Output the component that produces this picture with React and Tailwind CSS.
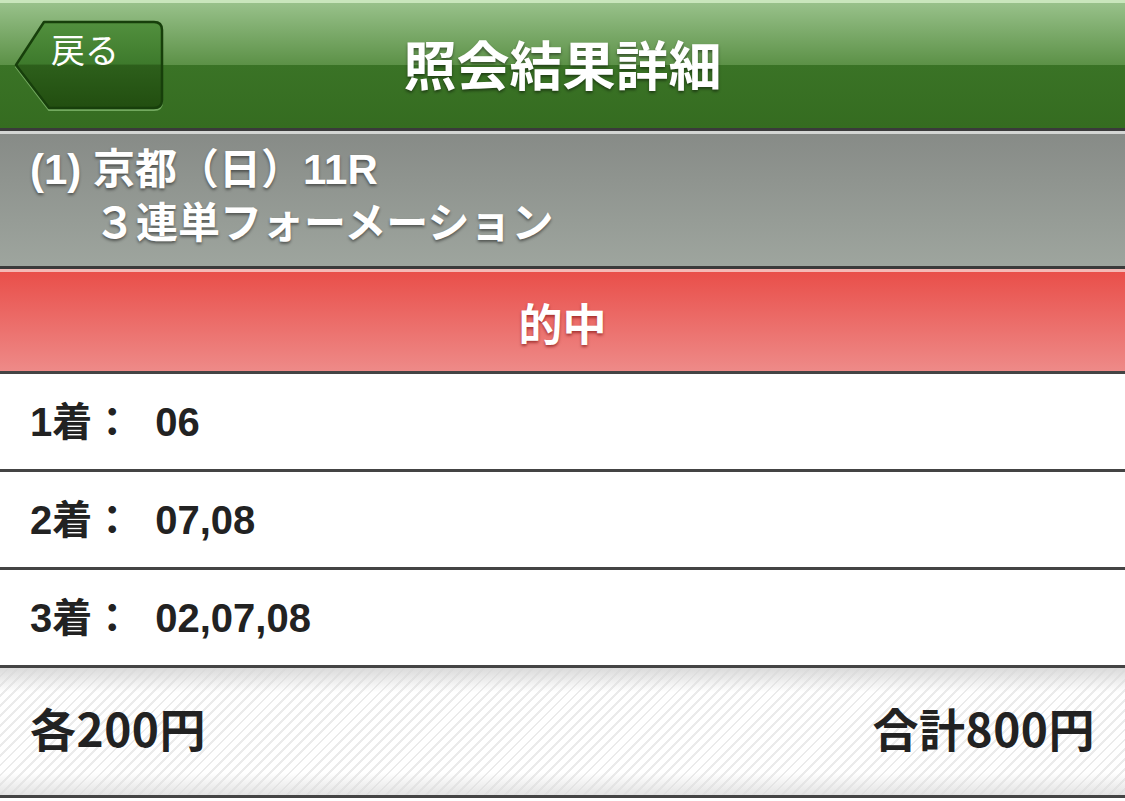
function BackButton() {
  return (
    <button className="absolute left-[14px] top-[20px] w-[152px] h-[94px]">
      <svg width="152" height="94" viewBox="0 0 152 94" className="absolute left-0 top-0">
        <defs>
          <linearGradient id="backFill" x1="0" y1="0" x2="0" y2="1">
            <stop offset="0" stopColor="#52903e" />
            <stop offset="0.49" stopColor="#3e7a2c" />
            <stop offset="0.5" stopColor="#2d5f1b" />
            <stop offset="1" stopColor="#224e10" />
          </linearGradient>
        </defs>
        <path
          d="M2 47 L30 4 H140 Q148 4 148 12 V82 Q148 90 140 90 H35 Z"
          fill="none"
          stroke="#72a95e"
          strokeWidth="2"
        />
        <path
          d="M2 45 L30 2 H140 Q148 2 148 10 V80 Q148 88 140 88 H35 Z"
          fill="url(#backFill)"
          stroke="#173f0b"
          strokeWidth="2.5"
          strokeLinejoin="round"
        />
      </svg>
      <span className="absolute left-[37px] top-[12px] text-white text-[34px] leading-none font-['Noto_Sans_CJK_JP',sans-serif] font-normal">
        戻る
      </span>
    </button>
  );
}

function Row({ place, value }) {
  return (
    <>
      <div className="h-[95px] flex items-center pl-[30px] text-[40px] font-bold text-[#222] font-['Liberation_Sans','Noto_Sans_CJK_JP',sans-serif]">
        <span>{place}着：</span>
        <span className="ml-[23px]">{value}</span>
      </div>
      <div className="h-[3px] bg-[#444]" />
    </>
  );
}

export default function App() {
  return (
    <div className="w-[1125px] h-[801px] bg-white overflow-hidden font-['Liberation_Sans','Noto_Sans_CJK_JP',sans-serif]">
      <header className="relative h-[128px] flex items-center justify-center bg-[linear-gradient(to_bottom,#c9e6bc_0px,#c9e6bc_3px,#98c18a_3px,#5c9147_65px,#3a7326_65px,#356c20_128px)]">
        <BackButton />
        <h1 className="pb-[2px] text-white font-bold text-[53px] leading-none font-['Noto_Sans_CJK_JP',sans-serif] [text-shadow:0_2px_3px_rgba(0,0,0,0.45)]">
          照会結果詳細
        </h1>
      </header>
      <div className="h-[3px] bg-[#3a3a3a]" />
      <div className="h-[3px] bg-[#d3d5d3]" />

      <section className="h-[132px] pt-[11px] pl-[30px] text-white font-bold text-[42px] leading-[50px] bg-[linear-gradient(to_bottom,#878b87,#9ea59e)] [text-shadow:0_2px_3px_rgba(0,0,0,0.45)]">
        <div>(1) 京都（日）11R</div>
        <div className="pl-[64px] font-['Noto_Sans_CJK_JP',sans-serif]">３連単フォーメーション</div>
      </section>
      <div className="h-[3px] bg-[#3a3a3a]" />
      <div className="h-[3px] bg-[#f4b9b6]" />

      <section className="h-[99px] flex items-center justify-center bg-[linear-gradient(to_bottom,#e94f4a,#ee8a88)]">
        <span className="text-white font-bold text-[44px] leading-none font-['Noto_Sans_CJK_JP',sans-serif] [text-shadow:0_2px_3px_rgba(110,0,0,0.55)]">
          的中
        </span>
      </section>
      <div className="h-[3px] bg-[#444]" />

      <Row place="1" value="06" />
      <Row place="2" value="07,08" />
      <Row place="3" value="02,07,08" />

      <footer className="h-[127px] flex items-center justify-between pl-[30px] pr-[30px] pb-[8px] text-[46px] font-bold text-[#222] font-['Noto_Sans_CJK_JP',sans-serif] [background-image:linear-gradient(to_bottom,rgba(215,215,215,0.9)_0px,rgba(255,255,255,0)_24px,rgba(255,255,255,0)_105px,rgba(220,220,220,0.8)_127px),repeating-linear-gradient(135deg,#ffffff_0px,#ffffff_5px,#ebebeb_5px,#ebebeb_7px)]">
        <span className="tracking-[0.5px]">各200円</span>
        <span className="tracking-[0.5px]">合計800円</span>
      </footer>
      <div className="h-[3px] bg-[#444]" />
    </div>
  );
}
